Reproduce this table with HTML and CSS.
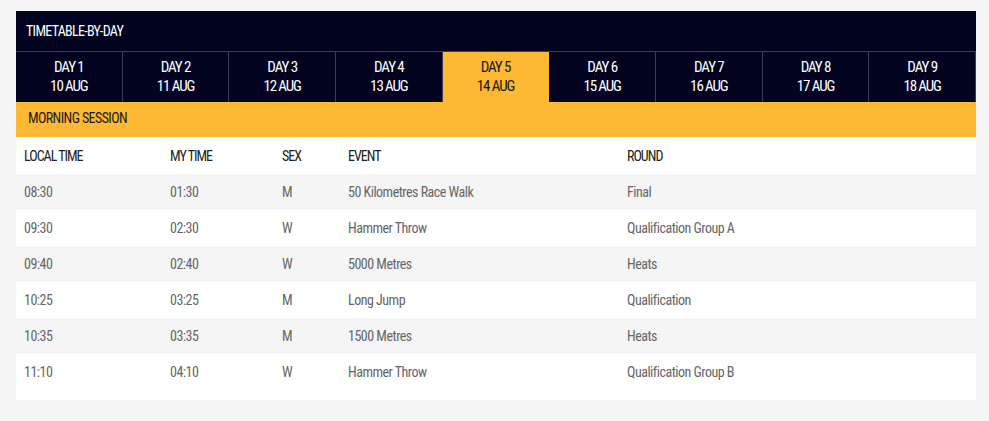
FILE: index.html
```html
<!DOCTYPE html>
<html>
<head>
<meta charset="utf-8">
<link rel="stylesheet" href="styles.css">
</head>
<body>
<div class="panel">
  <div class="title">TIMETABLE-BY-DAY</div>
  <div class="tabs">
    <div class="tab"><span>DAY 1</span><span>10 AUG</span></div>
    <div class="tab"><span>DAY 2</span><span>11 AUG</span></div>
    <div class="tab"><span>DAY 3</span><span>12 AUG</span></div>
    <div class="tab"><span>DAY 4</span><span>13 AUG</span></div>
    <div class="tab active"><span>DAY 5</span><span>14 AUG</span></div>
    <div class="tab"><span>DAY 6</span><span>15 AUG</span></div>
    <div class="tab"><span>DAY 7</span><span>16 AUG</span></div>
    <div class="tab"><span>DAY 8</span><span>17 AUG</span></div>
    <div class="tab"><span>DAY 9</span><span>18 AUG</span></div>
  </div>
  <div class="session">MORNING SESSION</div>
  <div class="table">
    <div class="row head"><span>LOCAL TIME</span><span>MY TIME</span><span>SEX</span><span>EVENT</span><span>ROUND</span></div>
    <div class="row"><span>08:30</span><span>01:30</span><span>M</span><span>50 Kilometres Race Walk</span><span>Final</span></div>
    <div class="row"><span>09:30</span><span>02:30</span><span>W</span><span>Hammer Throw</span><span>Qualification Group A</span></div>
    <div class="row"><span>09:40</span><span>02:40</span><span>W</span><span>5000 Metres</span><span>Heats</span></div>
    <div class="row"><span>10:25</span><span>03:25</span><span>M</span><span>Long Jump</span><span>Qualification</span></div>
    <div class="row"><span>10:35</span><span>03:35</span><span>M</span><span>1500 Metres</span><span>Heats</span></div>
    <div class="row"><span>11:10</span><span>04:10</span><span>W</span><span>Hammer Throw</span><span>Qualification Group B</span></div>
  </div>
</div>
</body>
</html>
```
FILE: styles.css
```css
html, body {
  margin: 0;
  padding: 0;
  background: #f5f5f5;
}
body {
  padding: 11px 13px 21px 16px;
  font-family: "Roboto", "DejaVu Sans", sans-serif;
  font-stretch: condensed;
}
.panel {
  width: 960px;
  background: #ffffff;
  padding-bottom: 10px;
}
.title {
  background: #02031f;
  color: #ffffff;
  height: 40px;
  line-height: 40px;
  padding-left: 10px;
  font-size: 14px;
  letter-spacing: -0.7px;
}
.tabs {
  display: grid;
  grid-template-columns: repeat(9, 1fr);
  background: #02031f;
  border-top: 1px solid #3b3c5a;
}
.tab {
  height: 50px;
  display: flex;
  flex-direction: column;
  align-items: center;
  justify-content: center;
  color: #ffffff;
  font-size: 15px;
  line-height: 19px;
  letter-spacing: -1.1px;
  border-right: 1px solid #3b3c5a;
}
.tab.active {
  background: #fdb933;
  color: #1a1a1a;
  border-right-color: #fdb933;
}
.session {
  background: #fdb933;
  color: #1a1a1a;
  height: 35px;
  line-height: 33px;
  padding-left: 12px;
  font-size: 14px;
  letter-spacing: -0.6px;
}
.row {
  display: grid;
  grid-template-columns: 146px 112px 66px 279px 1fr;
  height: 36px;
  align-items: center;
  padding-left: 8px;
  font-size: 14px;
  letter-spacing: -0.5px;
  color: #666666;
}
.row:nth-child(even) {
  background: #f5f5f5;
}
.row.head {
  height: 37px;
  color: #222222;
  letter-spacing: -1px;
}
```
